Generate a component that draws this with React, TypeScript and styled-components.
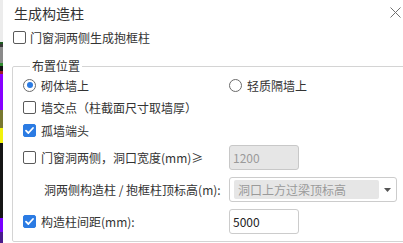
import React, { FC } from 'react'
import styled, { createGlobalStyle } from 'styled-components'

const Global = createGlobalStyle`
  html, body { margin: 0; padding: 0; background: #fff; }
  body {
    font-family: "Noto Sans CJK SC", "Microsoft YaHei", sans-serif;
    font-size: 12px;
    color: #333;
  }
`

const strip = [
  { h: 42, c: '#ececec' },
  { h: 2, c: '#1f5a22' },
  { h: 3, c: '#3a3a3a' },
  { h: 16, c: '#8a8a8a' },
  { h: 3, c: '#2f8a2f' },
  { h: 5, c: '#121212' },
  { h: 3, c: '#9a1e2a' },
  { h: 36, c: '#8700ff' },
  { h: 18, c: '#787830' },
  { h: 15, c: '#f2f20c' },
  { h: 75, c: '#151515' },
  { h: 14, c: '#7800ff' },
  { h: 11, c: '#4a1c8c' },
]

const Check: FC<{ checked?: boolean }> = ({ checked }) => (
  <CheckBox $checked={checked}>
    {checked && (
      <svg width="11" height="11" viewBox="0 0 11 11">
        <path d="M2 5.6 L4.4 8 L9 3" fill="none" stroke="#fff" strokeWidth="1.8" strokeLinecap="round" strokeLinejoin="round" />
      </svg>
    )}
  </CheckBox>
)

const Radio: FC<{ checked?: boolean }> = ({ checked }) => (
  <RadioCircle>{checked && <RadioDot />}</RadioCircle>
)

const App: FC = () => {
  return (
    <>
      <Global />
      <Screen>
        <Strip>
          {strip.map((s, i) => (
            <Segment key={i} $h={s.h} $c={s.c} />
          ))}
        </Strip>
        <Dialog>
          <TitleBar>
            <Title>生成构造柱</Title>
            <svg width="11" height="11" viewBox="0 0 11 11">
              <path d="M0.5 0.5 L10.5 10.5 M10.5 0.5 L0.5 10.5" stroke="#707070" strokeWidth="1" />
            </svg>
          </TitleBar>
          <TopOption>
            <Check />
            <span>门窗洞两侧生成抱框柱</span>
          </TopOption>
          <Group>
            <Legend>布置位置</Legend>
            <Row $h={22}>
              <Option>
                <Radio checked />
                <span>砌体墙上</span>
              </Option>
              <Option>
                <Radio />
                <span>轻质隔墙上</span>
              </Option>
            </Row>
            <Row $h={22}>
              <Option>
                <Check />
                <span>墙交点（柱截面尺寸取墙厚）</span>
              </Option>
            </Row>
            <Row $h={22} $mt={1}>
              <Option>
                <Check checked />
                <span>孤墙端头</span>
              </Option>
            </Row>
            <Row $h={25} $mt={4}>
              <Option>
                <Check />
                <span>门窗洞两侧，洞口宽度(mm)≥</span>
              </Option>
              <Field $disabled value="1200" readOnly />
            </Row>
            <Row $h={25} $mt={7}>
              <SubLabel>洞两侧构造柱 / 抱框柱顶标高(m):</SubLabel>
              <Select>
                <SelectValue>洞口上方过梁顶标高</SelectValue>
                <svg width="7" height="4" viewBox="0 0 7 4">
                  <path d="M0 0 L7 0 L3.5 4 Z" fill="#555" />
                </svg>
              </Select>
            </Row>
            <Row $h={25} $mt={7}>
              <Option>
                <Check checked />
                <span>构造柱间距(mm):</span>
              </Option>
              <Field value="5000" readOnly />
            </Row>
          </Group>
        </Dialog>
      </Screen>
    </>
  )
}

export default App

const Screen = styled.div`
  width: 403px;
  height: 243px;
  display: flex;
  overflow: hidden;
`

const Strip = styled.div`
  width: 3px;
  display: flex;
  flex-direction: column;
  flex-shrink: 0;
`

const Segment = styled.div<{ $h: number; $c: string }>`
  height: ${p => p.$h}px;
  background: ${p => p.$c};
  flex-shrink: 0;
`

const Dialog = styled.div`
  flex: 1;
  display: flex;
  flex-direction: column;
  background: #fff;
  overflow: hidden;
`

const TitleBar = styled.div`
  height: 25px;
  display: flex;
  align-items: center;
  justify-content: space-between;
  padding: 0 2px 0 11px;
`

const Title = styled.span`
  font-size: 14px;
  color: #333;
`

const TopOption = styled.label`
  height: 24px;
  display: flex;
  align-items: center;
  gap: 4px;
  padding-left: 10px;
`

const Group = styled.fieldset`
  margin: 10px -20px 0 9px;
  padding: 1px 0 7px 10px;
  border: 1px solid #d4d4d4;
  border-radius: 2px;
  min-width: 0;
`

const Legend = styled.legend`
  padding: 0 2px;
  margin-left: 7px;
  line-height: 14px;
  font-size: 12px;
  color: #333;
`

const Row = styled.div<{ $h: number; $mt?: number }>`
  height: ${p => p.$h}px;
  margin-top: ${p => p.$mt ?? 0}px;
  display: grid;
  grid-template-columns: 206px auto;
  align-items: center;
`

const Option = styled.label`
  display: flex;
  align-items: center;
  gap: 5px;
  white-space: nowrap;
`

const CheckBox = styled.span<{ $checked?: boolean }>`
  width: 13px;
  height: 13px;
  box-sizing: border-box;
  border-radius: 2px;
  border: 1px solid ${p => (p.$checked ? '#2b7be3' : '#5a5a5a')};
  background: ${p => (p.$checked ? '#2b7be3' : '#fff')};
  display: flex;
  align-items: center;
  justify-content: center;
  flex-shrink: 0;
`

const RadioCircle = styled.span`
  width: 13px;
  height: 13px;
  box-sizing: border-box;
  border-radius: 50%;
  border: 1px solid #6a6a6a;
  display: flex;
  align-items: center;
  justify-content: center;
  flex-shrink: 0;
`

const RadioDot = styled.span`
  width: 6px;
  height: 6px;
  border-radius: 50%;
  background: #2b7be3;
`

const Field = styled.input<{ $disabled?: boolean }>`
  width: 70px;
  height: 25px;
  box-sizing: border-box;
  border: 1px solid ${p => (p.$disabled ? '#c8c8c8' : '#cccccc')};
  border-radius: 3px;
  background: ${p => (p.$disabled ? '#e6e6e6' : '#fff')};
  color: ${p => (p.$disabled ? '#9a9a9a' : '#222')};
  font-family: "Noto Sans CJK SC", sans-serif;
  font-size: 12px;
  padding: 0 0 0 3px;
  outline: none;
`

const SubLabel = styled.span`
  padding-left: 21px;
  white-space: nowrap;
`

const Select = styled.div`
  width: 168px;
  height: 25px;
  box-sizing: border-box;
  border: 1px solid #cccccc;
  border-radius: 3px;
  background: #fff;
  display: flex;
  align-items: center;
  gap: 5px;
  padding: 2px 5px 2px 4px;
`

const SelectValue = styled.div`
  flex: 1;
  height: 100%;
  background: #e6e6e6;
  border-radius: 2px;
  color: #9a9a9a;
  display: flex;
  align-items: center;
  padding-left: 4px;
`
